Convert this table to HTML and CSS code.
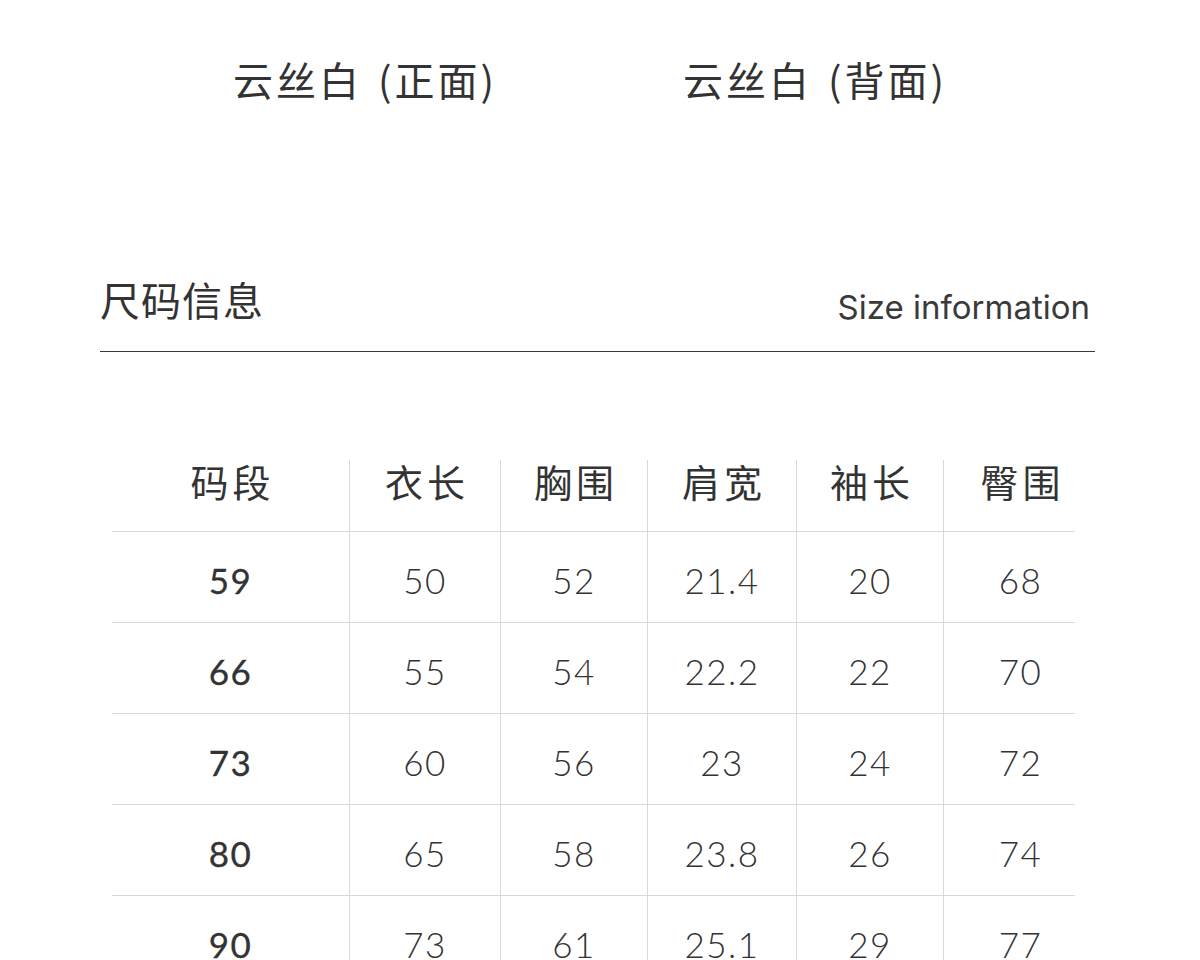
FILE: index.html
```html
<!DOCTYPE html>
<html lang="zh">
<head>
<meta charset="utf-8">
<title>尺码信息</title>
<link rel="stylesheet" href="styles.css">
</head>
<body>
<div class="page">
  <div class="views">
    <div class="view">云丝白 (正面)</div>
    <div class="view">云丝白 (背面)</div>
  </div>

  <div class="section-head">
    <div class="section-title">尺码信息</div>
    <div class="section-sub">Size information</div>
  </div>

  <div class="size-table">
    <div class="cell head first">码段</div>
    <div class="cell head">衣长</div>
    <div class="cell head">胸围</div>
    <div class="cell head">肩宽</div>
    <div class="cell head">袖长</div>
    <div class="cell head last">臀围</div>

    <div class="cell first num-bold">59</div>
    <div class="cell num">50</div>
    <div class="cell num">52</div>
    <div class="cell num">21.4</div>
    <div class="cell num">20</div>
    <div class="cell num last">68</div>

    <div class="cell first num-bold">66</div>
    <div class="cell num">55</div>
    <div class="cell num">54</div>
    <div class="cell num">22.2</div>
    <div class="cell num">22</div>
    <div class="cell num last">70</div>

    <div class="cell first num-bold">73</div>
    <div class="cell num">60</div>
    <div class="cell num">56</div>
    <div class="cell num">23</div>
    <div class="cell num">24</div>
    <div class="cell num last">72</div>

    <div class="cell first num-bold">80</div>
    <div class="cell num">65</div>
    <div class="cell num">58</div>
    <div class="cell num">23.8</div>
    <div class="cell num">26</div>
    <div class="cell num last">74</div>

    <div class="cell first num-bold">90</div>
    <div class="cell num">73</div>
    <div class="cell num">61</div>
    <div class="cell num">25.1</div>
    <div class="cell num">29</div>
    <div class="cell num last">77</div>
  </div>
</div>
</body>
</html>
```

FILE: styles.css
```css
html, body {
  margin: 0;
  padding: 0;
  background: #ffffff;
}

body {
  font-family: "Noto Sans CJK SC", "Noto Sans", sans-serif;
  color: #333333;
}

.page {
  width: 1200px;
}

.views {
  display: flex;
  padding: 55px 0 0 140px;
}

.view {
  width: 450px;
  text-align: center;
  font-size: 40px;
  line-height: 48px;
  letter-spacing: 3px;
  word-spacing: 4px;
  color: #333333;
}

.section-head {
  display: flex;
  justify-content: space-between;
  align-items: flex-end;
  margin: 172px 105px 0 100px;
  padding-bottom: 28px;
  border-bottom: 1.5px solid #3a3a3a;
}

.section-title {
  font-size: 40px;
  line-height: 48px;
  letter-spacing: 1px;
  color: #333333;
}

.section-sub {
  font-family: "Inter", "Noto Sans", sans-serif;
  font-size: 33px;
  line-height: 33px;
  color: #3a3a3a;
  margin-bottom: -1px;
  padding-right: 5px;
}

.size-table {
  display: grid;
  grid-template-columns: 237px 151px 147px 149px 147px 154px;
  margin: 108px 0 0 112px;
}

.cell {
  display: flex;
  justify-content: center;
  align-items: center;
  height: 90px;
  border-left: 1px solid #d9d9d9;
  border-bottom: 1px solid #d9d9d9;
  box-sizing: content-box;
}

.cell.first {
  border-left: none;
}

.cell.last {
  border-bottom: none;
  padding-bottom: 1px;
  background: linear-gradient(#d9d9d9, #d9d9d9) left bottom / 131px 1px no-repeat;
}

.cell.head {
  height: 71px;
  align-items: flex-start;
  font-size: 38px;
  line-height: 42px;
  letter-spacing: 4px;
  padding-left: 4px;
  color: #333333;
}

.num,
.num-bold {
  font-family: "Lato", "Open Sans", sans-serif;
  font-size: 35px;
  line-height: 40px;
  padding-top: 5px;
  height: 85px;
  letter-spacing: 1.5px;
  color: #333333;
}

.num {
  font-weight: 300;
}

.num-bold {
  font-weight: 400;
  -webkit-text-stroke: 0.3px #333333;
}
```
